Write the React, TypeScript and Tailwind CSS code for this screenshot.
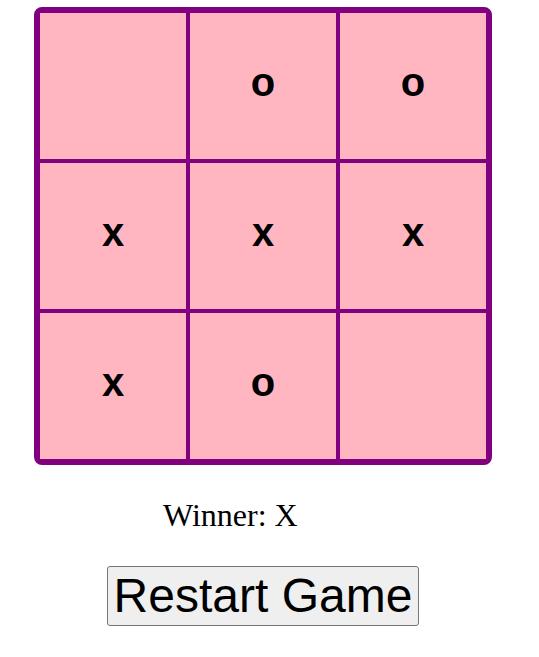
export default function App() {
  const cells = ["", "o", "o", "x", "x", "x", "x", "o", ""];
  return (
    <div className="w-[526px] flex flex-col items-center pt-[7px] font-['Liberation_Sans',Arial,sans-serif]">
      <div className="grid grid-cols-3 border-4 border-[#800080] rounded-[8px] bg-[#800080]">
        {cells.map((c, i) => (
          <div
            key={i}
            className="w-[150px] h-[150px] border-2 border-[#800080] bg-[#ffb6c1] flex items-center justify-center pb-[8px] text-[40px] leading-[46px] font-bold text-black"
          >
            {c}
          </div>
        ))}
      </div>
      <div className="self-start ml-[163px] mt-[32px] text-[32px] leading-[37px] text-black font-['Liberation_Serif','Times_New_Roman',serif]">
        Winner: X
      </div>
      <button className="mt-[32px] text-[48px] leading-[56px] text-black bg-[#efefef] border border-[#767676] rounded-[3px] px-[6px] py-[1px]">
        Restart Game
      </button>
    </div>
  );
}
